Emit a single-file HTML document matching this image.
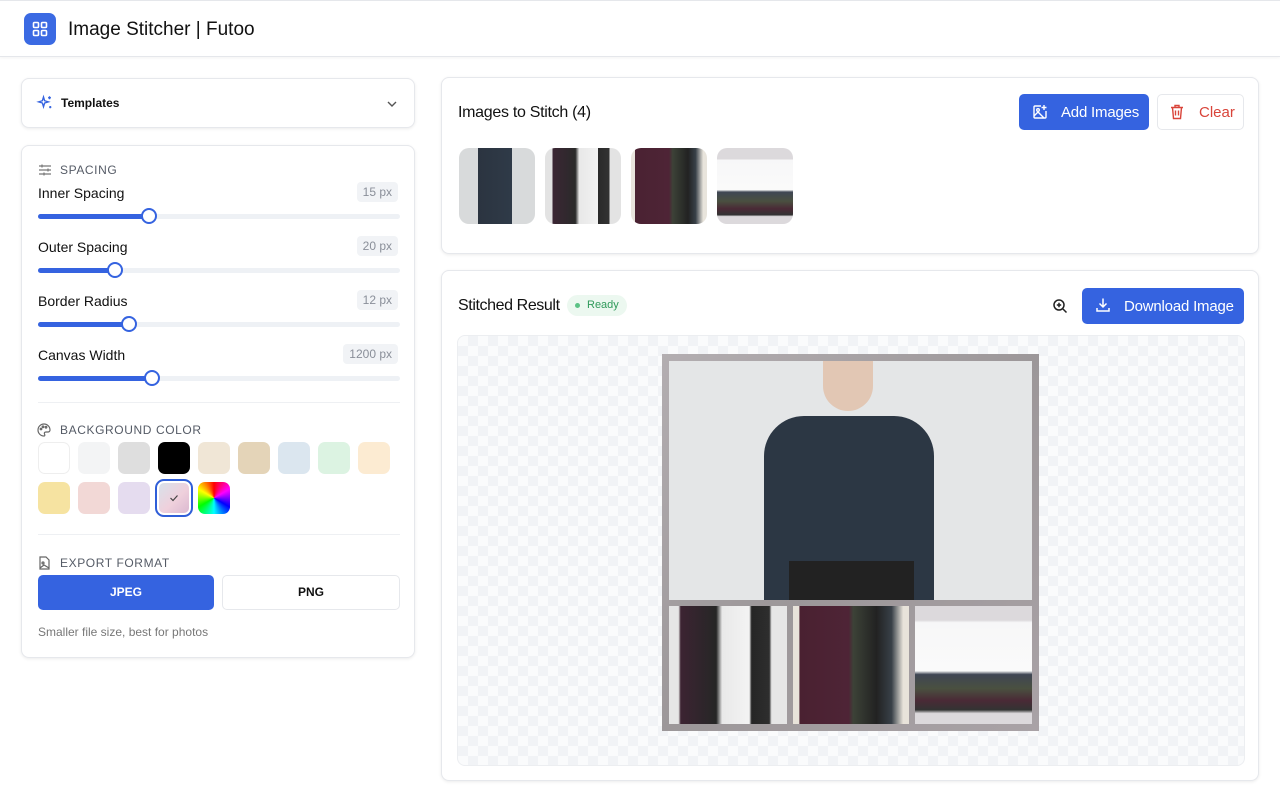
<!DOCTYPE html>
<html><head><meta charset="utf-8"><style>
*{box-sizing:border-box;margin:0;padding:0}
body{width:1280px;height:800px;background:#fff;font-family:"Liberation Sans",sans-serif;color:#111;position:relative;overflow:hidden}
.abs{position:absolute}
.card{position:absolute;background:#fff;border:1px solid #e6e8ec;border-radius:8px;box-shadow:0 1px 3px rgba(0,0,0,.08)}
.lbl{position:absolute;font-size:14px;color:#111}
.val{position:absolute;right:16px;font-size:12px;color:#8a8f99;background:#f1f3f6;border-radius:4px;padding:3px 6px}
.track{position:absolute;left:16px;width:362px;height:5px;background:#eef1f5;border-radius:3px}
.fill{position:absolute;left:0;top:0;height:5px;background:#3563e0;border-radius:3px}
.thumb{position:absolute;top:-6px;width:16px;height:16px;border:2px solid #3563e0;background:#fff;border-radius:50%;margin-left:-8px}
.sec{position:absolute;left:16px;font-size:12px;letter-spacing:.6px;color:#555b66}
.sw{position:absolute;width:32px;height:32px;border-radius:7px}
.thumbimg{position:absolute;top:70px;width:76px;height:76px;border-radius:10px;overflow:hidden}
</style></head><body>
<div class="abs" style="left:0;top:0;width:1280px;height:57px;border-bottom:1px solid #e5e7eb;box-shadow:0 1px 3px rgba(0,0,0,.05);border-top:1px solid #e5e7eb"></div>
<div class="abs" style="left:24px;top:13px;width:32px;height:32px;background:#3b6ae3;border-radius:7px">
<svg width="32" height="32" viewBox="0 0 32 32" fill="none" stroke="#fff" stroke-width="1.6"><rect x="9.5" y="9.5" width="5" height="5" rx="1"/><rect x="17.5" y="9.5" width="5" height="5" rx="1"/><rect x="9.5" y="17.5" width="5" height="5" rx="1"/><rect x="17.5" y="17.5" width="5" height="5" rx="1"/></svg></div>
<div class="abs" style="left:68px;top:19px;font-size:19px;color:#111">Image Stitcher | Futoo</div>

<div class="card" style="left:21px;top:78px;width:394px;height:50px">
<svg class="abs" style="left:14px;top:15px" width="18" height="18" viewBox="0 0 24 24" fill="none" stroke="#3563e0" stroke-width="1.8"><path d="M10 4l1.5 5 5 1.5-5 1.5L10 17l-1.5-5-5-1.5 5-1.5z"/><path d="M18 3v4M16 5h4M19 16v3M17.5 17.5h3"/></svg>
<div class="abs" style="left:39px;top:17px;font-size:12px;font-weight:bold">Templates</div>
<svg class="abs" style="left:364px;top:19px" width="12" height="12" viewBox="0 0 12 12" fill="none" stroke="#555" stroke-width="1.4"><path d="M2 4l4 4 4-4"/></svg>
</div>

<div class="card" style="left:21px;top:145px;width:394px;height:513px">
<svg class="abs" style="left:16px;top:17px" width="14" height="14" viewBox="0 0 14 14" fill="none" stroke="#777" stroke-width="1.2"><path d="M1 3h12M1 7h12M1 11h12"/><path d="M4 1.5v3M10 5.5v3M6 9.5v3"/></svg>
<div class="sec" style="left:38px;top:17px">SPACING</div>
<div class="lbl" style="left:16px;top:39px">Inner Spacing</div><div class="val" style="top:36px">15 px</div>
<div class="track" style="top:68px"><div class="fill" style="width:111px"></div><div class="thumb" style="left:111px"></div></div>
<div class="lbl" style="left:16px;top:93px">Outer Spacing</div><div class="val" style="top:90px">20 px</div>
<div class="track" style="top:122px"><div class="fill" style="width:77px"></div><div class="thumb" style="left:77px"></div></div>
<div class="lbl" style="left:16px;top:147px">Border Radius</div><div class="val" style="top:144px">12 px</div>
<div class="track" style="top:176px"><div class="fill" style="width:91px"></div><div class="thumb" style="left:91px"></div></div>
<div class="lbl" style="left:16px;top:201px">Canvas Width</div><div class="val" style="top:198px">1200 px</div>
<div class="track" style="top:230px"><div class="fill" style="width:114px"></div><div class="thumb" style="left:114px"></div></div>
<div class="abs" style="left:16px;top:256px;width:362px;height:1px;background:#eef0f3"></div>
<svg class="abs" style="left:15px;top:277px" width="14" height="14" viewBox="0 0 14 14" fill="none" stroke="#666" stroke-width="1.2"><path d="M7 1a6 6 0 100 12c1 0 1-1 .5-2s0-2 1.5-2h2A2 2 0 0013 7 6 6 0 007 1z"/><circle cx="4" cy="6" r=".8"/><circle cx="6" cy="3.8" r=".8"/><circle cx="9" cy="4.2" r=".8"/></svg>
<div class="sec" style="left:38px;top:277px">BACKGROUND COLOR</div>
<div class="sw" style="left:16px;top:296px;background:#fff;border:1px solid #eee"></div>
<div class="sw" style="left:56px;top:296px;background:#f3f4f5"></div>
<div class="sw" style="left:96px;top:296px;background:#dedede"></div>
<div class="sw" style="left:136px;top:296px;background:#000"></div>
<div class="sw" style="left:176px;top:296px;background:#f0e6d6"></div>
<div class="sw" style="left:216px;top:296px;background:#e4d4b8"></div>
<div class="sw" style="left:256px;top:296px;background:#dbe6ef"></div>
<div class="sw" style="left:296px;top:296px;background:#dcf3e2"></div>
<div class="sw" style="left:336px;top:296px;background:#fcebd2"></div>
<div class="sw" style="left:16px;top:336px;background:#f6e3a1"></div>
<div class="sw" style="left:56px;top:336px;background:#f2d8d6"></div>
<div class="sw" style="left:96px;top:336px;background:#e5dcef"></div>
<div class="sw" style="left:133px;top:333px;width:38px;height:38px;border:2px solid #2f5ed8;border-radius:9px;background:linear-gradient(135deg,#d5e4ec,#efd0dc 55%,#d8b5cf);box-shadow:inset 0 0 0 2px #fff"><svg style="position:absolute;left:12px;top:12px" width="10" height="10" viewBox="0 0 10 10" fill="none" stroke="#444" stroke-width="1.2"><path d="M1.5 5l2.5 2.5 4.5-5"/></svg></div>
<div class="sw" style="left:176px;top:336px;background:conic-gradient(from 0deg,red,#f0f,blue,cyan,lime,yellow,red)"></div>
<div class="abs" style="left:16px;top:388px;width:362px;height:1px;background:#eef0f3"></div>
<svg class="abs" style="left:16px;top:410px" width="13" height="14" viewBox="0 0 13 14" fill="none" stroke="#666" stroke-width="1.2"><path d="M2 1h6l3 3v9H2z"/><circle cx="5" cy="7" r="1"/><path d="M2 12l4-3 5 3"/></svg>
<div class="sec" style="left:38px;top:410px">EXPORT FORMAT</div>
<div class="abs" style="left:16px;top:429px;width:176px;height:35px;background:#3563e0;border-radius:5px;color:#fff;font-size:12px;font-weight:bold;text-align:center;line-height:35px">JPEG</div>
<div class="abs" style="left:200px;top:429px;width:178px;height:35px;border:1px solid #e6e8ec;border-radius:5px;font-size:12px;font-weight:bold;text-align:center;line-height:33px">PNG</div>
<div class="abs" style="left:16px;top:479px;font-size:12px;color:#777">Smaller file size, best for photos</div>
</div>

<div class="card" style="left:441px;top:77px;width:818px;height:177px">
<div class="abs" style="left:16px;top:26px;font-size:16px;letter-spacing:-.3px">Images to Stitch (4)</div>
<div class="abs" style="left:577px;top:16px;width:130px;height:36px;background:#3563e0;border-radius:5px;color:#fff;font-size:15px;line-height:38px;padding-left:42px;letter-spacing:-.2px">Add Images</div>
<svg class="abs" style="left:590px;top:26px" width="16" height="16" viewBox="0 0 16 16" fill="none" stroke="#fff" stroke-width="1.4"><path d="M9 2H3a1 1 0 00-1 1v10a1 1 0 001 1h10a1 1 0 001-1V7"/><circle cx="6" cy="6" r="1.3"/><path d="M2 12l4-4 6 6M12 1v5M9.5 3.5h5"/></svg>
<div class="abs" style="left:715px;top:16px;width:87px;height:36px;border:1px solid #e6e8ec;border-radius:5px;color:#d9443a;font-size:15px;line-height:36px;padding-left:41px">Clear</div>
<svg class="abs" style="left:728px;top:26px" width="14" height="16" viewBox="0 0 14 16" fill="none" stroke="#d9443a" stroke-width="1.4"><path d="M1 3.5h12M5 3.5V1.5h4v2M2.5 3.5l1 11h7l1-11M5.5 6.5v5M8.5 6.5v5"/></svg>
<div class="thumbimg" style="left:17px;background:linear-gradient(90deg,#d8dadb 25%,#2b3440 25%,#2f3a48 70%,#d8dadb 70%)"></div>
<div class="thumbimg" style="left:103px;background:linear-gradient(90deg,#e3e3e3 10%,#3b2634 10%,#2a2a2a 40%,#e8e8e8 45%,#f2f2f2 70%,#2a2a2a 70%,#333 85%,#e3e3e3 85%)"></div>
<div class="thumbimg" style="left:189px;background:linear-gradient(90deg,#e8e4dc 5%,#4a2232 5%,#4e2436 50%,#3c4237 55%,#222 75%,#384048 85%,#e8e4dc 95%)"></div>
<div class="thumbimg" style="left:275px;background:linear-gradient(180deg,#dcd9dc 15%,#f7f7f8 15%,#fafafa 55%,#3f4654 58%,#4a5040 70%,#4a2a36 80%,#333 88%,#dcd9dc 90%)"></div>
</div>

<div class="card" style="left:441px;top:270px;width:818px;height:511px">
<div class="abs" style="left:16px;top:26px;font-size:16px;letter-spacing:-.4px">Stitched Result</div>
<div class="abs" style="left:125px;top:24px;height:21px;padding:0 8px 0 20px;background:#ecf8f0;border-radius:11px;color:#2f9a5a;font-size:11px;line-height:21px">Ready<span style="position:absolute;left:8px;top:8px;width:5px;height:5px;border-radius:50%;background:#5cc285"></span></div>
<svg class="abs" style="left:610px;top:27px" width="16" height="16" viewBox="0 0 16 16" fill="none" stroke="#222" stroke-width="1.5"><circle cx="7" cy="7" r="5"/><path d="M11 11l3.5 3.5M7 4.8v4.4M4.8 7h4.4"/></svg>
<div class="abs" style="left:640px;top:17px;width:162px;height:36px;background:#3563e0;border-radius:5px;color:#fff;font-size:15px;line-height:38px;padding-left:42px;letter-spacing:-.2px">Download Image</div>
<svg class="abs" style="left:653px;top:26px" width="16" height="16" viewBox="0 0 16 16" fill="none" stroke="#fff" stroke-width="1.5"><path d="M8 1.5v8M4.5 6.5L8 10l3.5-3.5M2 11v3h12v-3"/></svg>
<div class="abs" style="left:15px;top:64px;width:788px;height:431px;border:1px solid #eceef1;border-radius:8px;background-color:#fafbfc;background-image:linear-gradient(45deg,#f1f3f6 25%,transparent 25%,transparent 75%,#f1f3f6 75%),linear-gradient(45deg,#f1f3f6 25%,transparent 25%,transparent 75%,#f1f3f6 75%);background-size:20px 20px;background-position:0 0,10px 10px"></div>
<div class="abs" style="left:220px;top:83px;width:377px;height:377px;background:linear-gradient(135deg,#b3aeb1,#9c9799 50%,#a9a2a6)">
<div class="abs" style="left:7px;top:7px;width:363px;height:239px;background:#e4e6e7;overflow:hidden">
<div class="abs" style="left:154px;top:0;width:50px;height:50px;background:#e2c7b4;border-radius:0 0 25px 25px"></div>
<div class="abs" style="left:95px;top:55px;width:170px;height:190px;background:#2c3744;border-radius:40px 40px 0 0"></div>
<div class="abs" style="left:120px;top:200px;width:125px;height:40px;background:#222"></div>
</div>
<div class="abs" style="left:7px;top:252px;width:118px;height:118px;background:linear-gradient(90deg,#e6e6e6 8%,#3c2432 10%,#262626 40%,#e9e9e9 45%,#f3f3f3 68%,#252525 70%,#2e2e2e 85%,#e6e6e6 87%)"></div>
<div class="abs" style="left:131px;top:252px;width:116px;height:118px;background:linear-gradient(90deg,#e8e3da 5%,#4a2131 6%,#4e2436 48%,#3c4237 52%,#222 72%,#384048 85%,#e8e3da 95%)"></div>
<div class="abs" style="left:253px;top:252px;width:117px;height:118px;background:linear-gradient(180deg,#dcd9dc 12%,#f7f7f8 14%,#fafafa 55%,#3f4654 58%,#4a5040 70%,#4a2a36 80%,#333 88%,#dcd9dc 91%)"></div>
</div>
</div>
</body></html>
